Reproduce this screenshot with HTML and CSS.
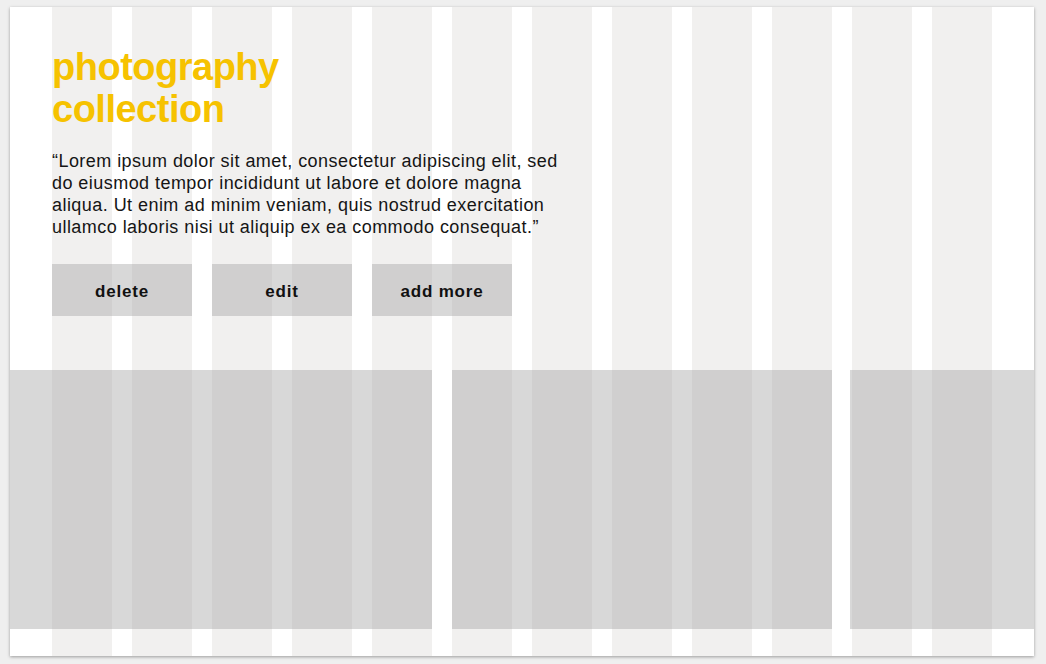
FILE: index.html
```html
<!DOCTYPE html>
<html>
<head>
<meta charset="utf-8">
<link rel="stylesheet" href="styles.css">
</head>
<body>
<div class="canvas">
  <div class="intro">
    <h1 class="title">photography<br>collection</h1>
    <p class="lead">“Lorem ipsum dolor sit amet, consectetur adipiscing elit, sed do eiusmod tempor incididunt ut labore et dolore magna aliqua. Ut enim ad minim veniam, quis nostrud exercitation ullamco laboris nisi ut aliquip ex ea commodo consequat.”</p>
    <div class="actions">
      <button class="btn">delete</button>
      <button class="btn">edit</button>
      <button class="btn">add more</button>
    </div>
  </div>
  <div class="gallery">
    <div class="photo photo-a"></div>
    <div class="photo photo-b"></div>
    <div class="photo photo-c"></div>
  </div>
</div>
</body>
</html>
```
FILE: styles.css
```css
html, body {
  margin: 0;
  padding: 0;
  background: #efefef;
}
body {
  font-family: "Liberation Sans", Arial, sans-serif;
  padding: 7px 12px 0 10px;
  height: 664px;
  box-sizing: border-box;
  overflow: hidden;
}
.canvas {
  width: 1024px;
  height: 649px;
  background-color: #ffffff;
  background-image: repeating-linear-gradient(to right, #f1f0ef 0 60px, rgba(255,255,255,0) 60px 80px);
  background-size: 940px 100%;
  background-position: 42px 0;
  background-repeat: no-repeat;
  box-shadow: 0 1px 3px rgba(0,0,0,0.35);
  display: flex;
  flex-direction: column;
}
.intro {
  padding: 39px 0 0 42px;
}
.title {
  margin: 0;
  font-size: 38px;
  line-height: 42px;
  font-weight: bold;
  letter-spacing: -0.5px;
  color: #f6c200;
}
.lead {
  margin: 20px 0 0 0;
  width: 520px;
  font-size: 18px;
  line-height: 22px;
  letter-spacing: 0.45px;
  color: #151515;
}
.actions {
  display: flex;
  gap: 20px;
  margin-top: 26px;
}
.btn {
  width: 140px;
  height: 52px;
  border: 0;
  padding: 4px 0 0 0;
  background: rgba(164,164,164,0.43);
  font-family: "Liberation Sans", Arial, sans-serif;
  font-size: 17px;
  font-weight: bold;
  letter-spacing: 0.8px;
  color: #111;
}
.gallery {
  display: flex;
  margin-top: 54px;
  height: 259px;
}
.photo {
  background: rgba(164,164,164,0.43);
  height: 100%;
}
.photo-a { width: 422px; }
.photo-b { width: 380px; margin-left: 20px; }
.photo-c { width: 184px; margin-left: 18px; }
```
